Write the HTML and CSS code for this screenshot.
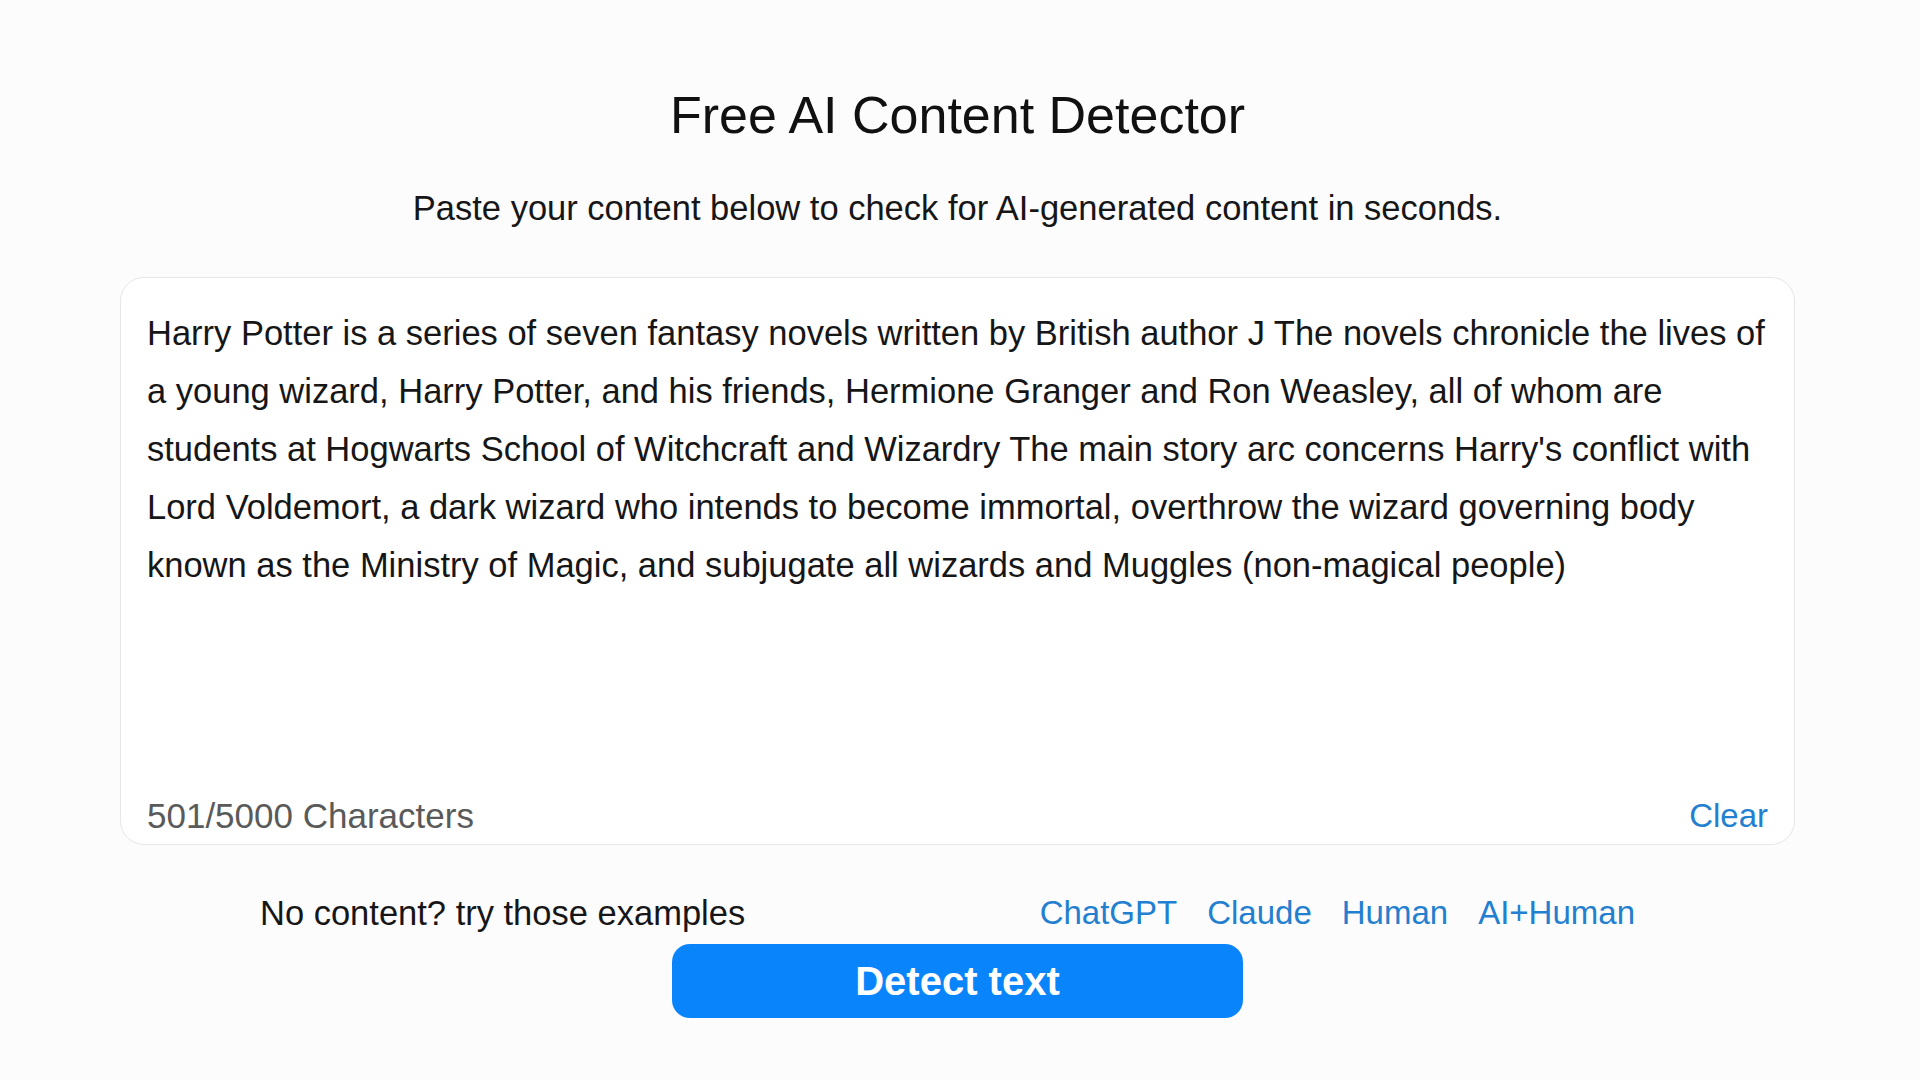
FILE: index.html
```html
<!DOCTYPE html>
<html>
  <head>
    <title>Free AI Content Detector</title>
    <meta charset='utf-8'>
    <link rel="stylesheet" href="styles.css">
  </head>

  <body>
    <div class="page">
      <h1 class="title">Free AI Content Detector</h1>
      <p class="subtitle">Paste your content below to check for AI-generated content in seconds.</p>

      <!-- 输入框 -->
      <div class="editor">
        <div class="editor-text">
          Harry Potter is a series of seven fantasy novels written by British author J The novels chronicle the lives of<br>
          a young wizard, Harry Potter, and his friends, Hermione Granger and Ron Weasley, all of whom are<br>
          students at Hogwarts School of Witchcraft and Wizardry The main story arc concerns Harry's conflict with<br>
          Lord Voldemort, a dark wizard who intends to become immortal, overthrow the wizard governing body<br>
          known as the Ministry of Magic, and subjugate all wizards and Muggles (non-magical people)
        </div>
        <div class="editor-foot">
          <span class="count">501/5000 Characters</span>
          <a class="clear" href="#">Clear</a>
        </div>
      </div>

      <div class="examples">
        <span>No content? try those examples</span>
        <div class="example-links">
          <a href="#">ChatGPT</a>
          <a href="#">Claude</a>
          <a href="#">Human</a>
          <a href="#">AI+Human</a>
        </div>
      </div>

      <button class="detect">Detect text</button>
    </div>
  </body>
</html>
```

FILE: styles.css
```css
body {
  margin: 0;
  padding-right: 5px;
  background: #fcfcfd;
  color: #161616;
  font-family: "Liberation Sans", Arial, sans-serif;
}

.page {
  width: 1675px;
  margin: 0 auto;
  display: flex;
  flex-direction: column;
  align-items: center;
}

.title {
  margin: 85px 0 0;
  font-size: 52px;
  line-height: 60px;
  font-weight: normal;
  color: #111;
}

.subtitle {
  margin: 43px 0 0;
  font-size: 34.5px;
  line-height: 40px;
}

.editor {
  box-sizing: border-box;
  width: 100%;
  height: 568px;
  margin-top: 49px;
  padding: 26px 26px 8px;
  background: #fff;
  border: 1px solid #e6e6eb;
  border-radius: 24px;
  display: flex;
  flex-direction: column;
}

.editor-text {
  flex: 1;
  font-size: 34.5px;
  line-height: 58px;
  white-space: nowrap;
}

.editor-foot {
  display: flex;
  justify-content: space-between;
  font-size: 35px;
  line-height: 40px;
}

.count {
  color: #5a5a5a;
}

a {
  color: #237fcf;
  text-decoration: none;
}

.clear {
  font-size: 33px;
}

.examples {
  box-sizing: border-box;
  width: 100%;
  margin-top: 48px;
  padding: 0 160px 0 140px;
  display: flex;
  justify-content: space-between;
  font-size: 34.5px;
  line-height: 40px;
}

.example-links {
  display: flex;
  gap: 30px;
  font-size: 33px;
}

.detect {
  margin-top: 11px;
  width: 571px;
  height: 74px;
  border: none;
  border-radius: 18px;
  background: #0a84fa;
  color: #fff;
  font-family: "Liberation Sans", Arial, sans-serif;
  font-size: 40px;
  font-weight: bold;
}
```
